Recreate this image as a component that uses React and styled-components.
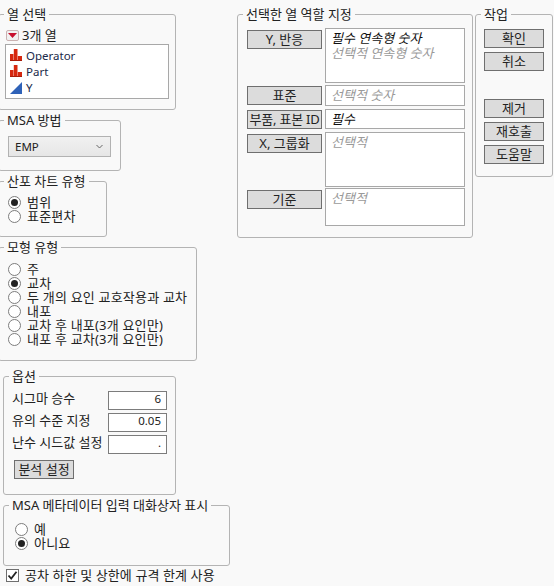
import React from "react";
import styled, { createGlobalStyle } from "styled-components";

const GlobalStyle = createGlobalStyle`
  html, body { margin: 0; padding: 0; background: #f9f9f9; }
  body {
    font-family: "Noto Sans", "Noto Sans CJK KR", sans-serif;
    font-size: 13px;
    color: #222;
    overflow: hidden;
  }
`;

const Page = styled.div`
  display: flex;
  width: 554px;
  height: 586px;
  overflow: hidden;
`;

const LeftColumn = styled.div`
  display: flex;
  flex-direction: column;
  flex: none;
  width: 232px;
  margin-left: -2px;
  padding-top: 6px;
  box-sizing: border-box;
`;

const RightColumn = styled.div`
  display: flex;
  gap: 2px;
  margin-left: 7px;
  padding-top: 6px;
  align-items: flex-start;
`;

const Group = styled.fieldset`
  box-sizing: border-box;
  width: ${({ $w }) => $w}px;
  height: ${({ $h }) => $h}px;
  margin: ${({ $mt = 2 }) => $mt}px 0 0 ${({ $ml = 0 }) => $ml}px;
  padding: 0;
  border: 1px solid #b4b4b4;
  border-radius: 3px;
  min-width: 0;
`;

const Legend = styled.legend`
  padding: 0 3px;
  margin-left: 5px;
  height: 16px;
  line-height: 17px;
  font-size: 13px;
  white-space: nowrap;
`;

const GroupBody = styled.div`
  padding-left: ${({ $pl = 9 }) => $pl}px;
`;

const ColumnCount = styled.div`
  display: flex;
  align-items: center;
  height: 16px;
  margin: 5px 0 0 -2px;
  gap: 3px;
  line-height: 16px;
`;

const PopupButton = styled.span`
  display: flex;
  align-items: center;
  justify-content: center;
  width: 13px;
  height: 11px;
  background: #f1f1f1;
  border: 1px solid #c9b2b2;
  border-radius: 2px;
  box-sizing: border-box;
`;

const ColumnList = styled.div`
  display: flex;
  flex-direction: column;
  box-sizing: border-box;
  width: 164px;
  height: 55px;
  margin: 1px 0 0 -3px;
  padding: 2px 4px;
  background: #fff;
  border: 1px solid #a8a8a8;
`;

const ColumnItem = styled.div`
  display: flex;
  align-items: center;
  gap: 4px;
  height: 16.5px;
  font-size: 11.5px;
  color: #1b2a4a;
`;

const Select = styled.div`
  display: flex;
  align-items: center;
  justify-content: space-between;
  box-sizing: border-box;
  width: 103px;
  height: 21px;
  margin-top: 8px;
  padding: 0 7px 0 6px;
  font-size: 11.5px;
  background: linear-gradient(#f1f1f1, #e6e6e6);
  border: 1px solid #b2b2b2;
`;

const RadioList = styled.div`
  display: flex;
  flex-direction: column;
  margin-top: ${({ $mt }) => $mt}px;
`;

const RadioRow = styled.div`
  display: flex;
  align-items: center;
  gap: 6px;
  height: 14px;
  line-height: 14px;
  letter-spacing: 0.2px;
  white-space: nowrap;
`;

const RadioMark = styled.span`
  display: flex;
  align-items: center;
  justify-content: center;
  flex: none;
  box-sizing: border-box;
  width: 13px;
  height: 13px;
  border: 1px solid #7d7d7d;
  border-radius: 50%;
  background: #fff;

  &::after {
    content: "";
    display: ${({ $on }) => ($on ? "block" : "none")};
    width: 7px;
    height: 7px;
    border-radius: 50%;
    background: #222;
  }
`;

const OptionRow = styled.div`
  display: flex;
  align-items: flex-start;
  justify-content: space-between;
  width: 155px;
  height: 19px;
  margin-top: 3px;
  &:first-of-type { margin-top: 7px; }
  line-height: 15px;
  white-space: nowrap;
`;

const NumberBox = styled.div`
  box-sizing: border-box;
  width: 59px;
  height: 19px;
  padding-right: 5px;
  font-size: 11.5px;
  line-height: 14px;
  text-align: right;
  background: #fff;
  border: 1px solid #7c7c7c;
`;

const RoleButton = styled.button`
  display: block;
  box-sizing: border-box;
  width: ${({ $w }) => $w}px;
  height: 19px;
  margin: ${({ $m = 0 }) => $m};
  padding: 0;
  font: inherit;
  color: #222;
  line-height: 15px;
  white-space: nowrap;
  letter-spacing: ${({ $tight }) => ($tight ? "-0.2px" : "normal")};
  background: #dcdcdc;
  border: 1px solid #6f6f6f;
`;

const RoleGrid = styled.div`
  display: grid;
  grid-template-columns: 75px 140px;
  column-gap: 3px;
  margin-top: 6px;
`;

const RoleSlot = styled.div`
  padding-top: ${({ $top = 2 }) => $top}px;
`;

const RoleField = styled.div`
  box-sizing: border-box;
  height: ${({ $h }) => $h}px;
  margin-bottom: ${({ $gap }) => $gap}px;
  padding: 2px 5px;
  background: #fff;
  border: 1px solid #a8a8a8;
`;

const Hint = styled.div`
  font-style: italic;
  color: ${({ $required }) => ($required ? "#111" : "#9a9a9a")};
  line-height: 15px;
  white-space: nowrap;
`;

const ActionStack = styled.div`
  display: flex;
  flex-direction: column;
  gap: 4px;
  margin-top: 7px;
`;

const ActionSpacer = styled.div`
  height: 20px;
`;

const CheckRow = styled.div`
  display: flex;
  align-items: center;
  gap: 6px;
  margin: 2px 0 0 8px;
  height: 15px;
  line-height: 15px;
  letter-spacing: 0.1px;
  white-space: nowrap;
`;

const CheckBox = styled.span`
  display: flex;
  align-items: center;
  justify-content: center;
  box-sizing: border-box;
  width: 13px;
  height: 13px;
  background: #fff;
  border: 1px solid #6f6f6f;
`;

const BarsIcon = () => (
  <svg width="12" height="12" viewBox="0 0 12 12">
    <path d="M0 5h3.4v7H0zM3.8 0h3.7v12H3.8zM7.9 7H12v5H7.9z" fill="#d6280f" />
    <path d="M0 11h12v1H0z" fill="#a81c08" />
  </svg>
);

const TriangleIcon = () => (
  <svg width="12" height="12" viewBox="0 0 12 12">
    <path d="M0 12 12 0v12z" fill="#2f62b8" />
  </svg>
);

const ColumnIcon = ({ kind }) => (kind === "bars" ? <BarsIcon /> : <TriangleIcon />);

const columns = [
  { name: "Operator", kind: "bars" },
  { name: "Part", kind: "bars" },
  { name: "Y", kind: "tri" },
];

const modelTypes = [
  "주",
  "교차",
  "두 개의 요인 교호작용과 교차",
  "내포",
  "교차 후 내포(3개 요인만)",
  "내포 후 교차(3개 요인만)",
];

const Radios = ({ items, selected, mt }) => (
  <RadioList $mt={mt}>
    {items.map((label) => (
      <RadioRow key={label}>
        <RadioMark $on={label === selected} />
        {label}
      </RadioRow>
    ))}
  </RadioList>
);

export default function App() {
  return (
    <Page>
      <GlobalStyle />
      <LeftColumn>
        <Group $w={178} $h={104} $mt={0}>
          <Legend>열 선택</Legend>
          <GroupBody>
            <ColumnCount>
              <PopupButton>
                <svg width="9" height="5" viewBox="0 0 9 5">
                  <path d="M0 0h9L4.5 5z" fill="#c8102e" />
                </svg>
              </PopupButton>
              3개 열
            </ColumnCount>
            <ColumnList>
              {columns.map((c) => (
                <ColumnItem key={c.name}>
                  <ColumnIcon kind={c.kind} />
                  {c.name}
                </ColumnItem>
              ))}
            </ColumnList>
          </GroupBody>
        </Group>

        <Group $w={123} $h={59}>
          <Legend>MSA 방법</Legend>
          <GroupBody>
            <Select>
              EMP
              <svg width="7" height="5" viewBox="0 0 7 5">
                <path d="M.5 1 3.5 4l3-3" fill="none" stroke="#666" />
              </svg>
            </Select>
          </GroupBody>
        </Group>

        <Group $w={109} $h={64}>
          <Legend>산포 차트 유형</Legend>
          <GroupBody>
            <Radios items={["범위", "표준편차"]} selected="범위" mt={6} />
          </GroupBody>
        </Group>

        <Group $w={199} $h={122}>
          <Legend>모형 유형</Legend>
          <GroupBody>
            <Radios items={modelTypes} selected="교차" mt={7} />
          </GroupBody>
        </Group>

        <Group $w={173} $h={127} $mt={7} $ml={5}>
          <Legend>옵션</Legend>
          <GroupBody $pl={8}>
            <OptionRow>
              시그마 승수
              <NumberBox>6</NumberBox>
            </OptionRow>
            <OptionRow>
              유의 수준 지정
              <NumberBox>0.05</NumberBox>
            </OptionRow>
            <OptionRow>
              난수 시드값 설정
              <NumberBox>.</NumberBox>
            </OptionRow>
            <RoleButton $w={60} $m="6px 0 0 2px">분석 설정</RoleButton>
          </GroupBody>
        </Group>

        <Group $w={227} $h={69} $ml={5}>
          <Legend>MSA 메타데이터 입력 대화상자 표시</Legend>
          <GroupBody $pl={11}>
            <Radios items={["예", "아니요"]} selected="아니요" mt={9} />
          </GroupBody>
        </Group>

        <CheckRow>
          <CheckBox>
            <svg width="11" height="11" viewBox="0 0 11 11">
              <path d="M1.5 5.5 4.2 8.5 9.5 1.8" fill="none" stroke="#222" strokeWidth="1.8" />
            </svg>
          </CheckBox>
          공차 하한 및 상한에 규격 한계 사용
        </CheckRow>
      </LeftColumn>

      <RightColumn>
        <Group $w={236} $h={232} $mt={0}>
          <Legend>선택한 열 역할 지정</Legend>
          <GroupBody>
            <RoleGrid>
              <RoleSlot><RoleButton $w={75}>Y, 반응</RoleButton></RoleSlot>
              <RoleField $h={55} $gap={2}>
                <Hint $required>필수 연속형 숫자</Hint>
                <Hint>선택적 연속형 숫자</Hint>
              </RoleField>
              <RoleSlot $top={1}><RoleButton $w={75}>표준</RoleButton></RoleSlot>
              <RoleField $h={21} $gap={3}><Hint>선택적 숫자</Hint></RoleField>
              <RoleSlot $top={1}><RoleButton $w={75} $tight>부품, 표본 ID</RoleButton></RoleSlot>
              <RoleField $h={20} $gap={3}><Hint $required>필수</Hint></RoleField>
              <RoleSlot><RoleButton $w={75}>X, 그룹화</RoleButton></RoleSlot>
              <RoleField $h={55} $gap={1}><Hint>선택적</Hint></RoleField>
              <RoleSlot><RoleButton $w={75}>기준</RoleButton></RoleSlot>
              <RoleField $h={38} $gap={0}><Hint>선택적</Hint></RoleField>
            </RoleGrid>
          </GroupBody>
        </Group>

        <Group $w={78} $h={171} $mt={0}>
          <Legend>작업</Legend>
          <GroupBody $pl={8}>
            <ActionStack>
              <RoleButton $w={60}>확인</RoleButton>
              <RoleButton $w={60}>취소</RoleButton>
              <ActionSpacer />
              <RoleButton $w={60}>제거</RoleButton>
              <RoleButton $w={60}>재호출</RoleButton>
              <RoleButton $w={60}>도움말</RoleButton>
            </ActionStack>
          </GroupBody>
        </Group>
      </RightColumn>
    </Page>
  );
}
